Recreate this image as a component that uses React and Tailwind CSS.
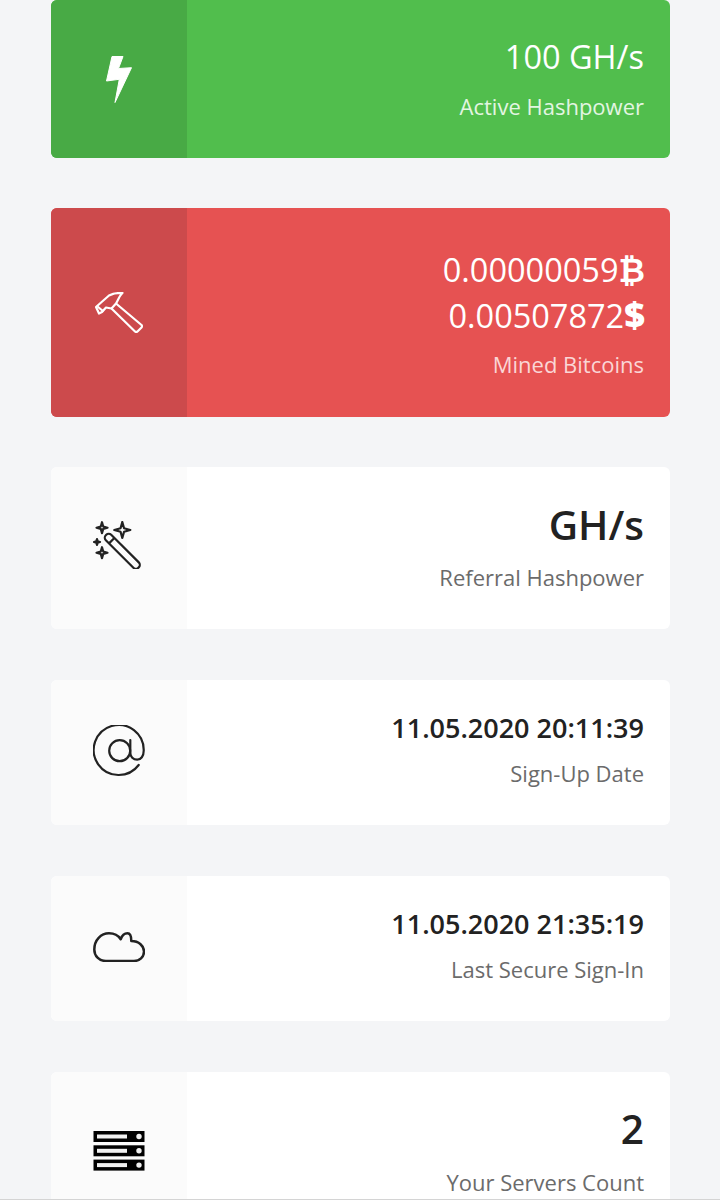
const font = { fontFamily: '"Open Sans", sans-serif' };

function Bolt() {
  return (
    <svg width="26" height="47" viewBox="0 0 26 47" fill="white" stroke="white" strokeWidth="1" strokeLinejoin="round">
      <path d="M6 .5h11l-4.500 12 13-.8L9 46.500l4.300-23.200L.5 25z" />
    </svg>
  );
}

function Hammer() {
  return (
    <svg width="48" height="41" viewBox="0 0 48 41" fill="none" stroke="white" strokeWidth="2.200" strokeLinejoin="round">
      <path d="M1 15L14 3.500C18 1.500 23 .8 27.500 1 25 3 24 6 21 11.500l-4.500 5-5.500-1-4 4.500-3 1.500z" />
      <path d="M2.500 14.500l6 5" />
      <path d="M21 11.500L46.500 33a2 2 0 0 1 0 2.500L42.500 39.500a2 2 0 0 1-2.500 0L16.500 16.500" />
    </svg>
  );
}

function Sparkle({ x, y, r, fill = 'none' }) {
  const k = r * 0.22;
  return (
    <path
      fill={fill}
      d={`M${x} ${y - r}L${x + k} ${y - k}L${x + r} ${y}L${x + k} ${y + k}L${x} ${y + r}L${x - k} ${y + k}L${x - r} ${y}L${x - k} ${y - k}Z`}
    />
  );
}

function Wand() {
  return (
    <svg width="48" height="48" viewBox="0 0 48 48" fill="none" stroke="#222" strokeWidth="2.200" strokeLinejoin="round">
      <Sparkle x={9} y={6.700} r={5.500} />
      <Sparkle x={29.300} y={9} r={8} />
      <Sparkle x={4} y={21} r={3} fill="#222" />
      <Sparkle x={9} y={31.700} r={5.500} />
      <g transform="translate(29.300 30.300) rotate(45)">
        <rect x="-23" y="-3.800" width="46" height="7.600" rx="3.500" />
        <path d="M-15 -3.800V3.800" />
      </g>
    </svg>
  );
}

function At() {
  return (
    <svg width="52" height="52" viewBox="0 0 52 52" fill="none" stroke="#222" strokeWidth="2.200" strokeLinecap="round">
      <circle cx="26.700" cy="25.700" r="10.500" />
      <path d="M45.700 40A25 25 0 1 1 50.700 25.700c0 5.500-2.800 9-6.500 9-4 0-6.900-3-6.900-7V15" />
    </svg>
  );
}

function Cloud() {
  return (
    <svg width="52" height="30" viewBox="0 0 52 30" fill="none" stroke="#222" strokeWidth="2.500" strokeLinejoin="round">
      <path d="M13 29C6 29 1.300 24 1.300 17.500 1.300 8 8 1.300 16 1.300c5 0 9.500 2.500 11.700 6C29 3.500 31.500 1.300 34.500 1.300c2.800 0 3.800 3.500 3.800 7.700C46 9 51 14 51 19.500 51 25 46.500 29 41 29z" />
    </svg>
  );
}

function Servers() {
  return (
    <svg width="52" height="40" viewBox="0 0 52 40">
      {[0, 14.300, 28.600].map((y) => (
        <g key={y}>
          <rect x="0.500" y={y} width="51" height="11" fill="#000" />
          <rect x="4" y={y + 3.500} width="30" height="4" fill="#f0f0f0" />
          <circle cx="46" cy={y + 5.500} r="2.700" fill="#f0f0f0" />
        </g>
      ))}
    </svg>
  );
}

function Card({ icon, className, iconClass, children }) {
  return (
    <div className={`flex rounded-md overflow-hidden shrink-0 ${className}`}>
      <div className={`w-[136px] shrink-0 flex items-center justify-center ${iconClass}`}>{icon}</div>
      <div className="flex-1 text-right pr-[26px]">{children}</div>
    </div>
  );
}

export default function App() {
  return (
    <div style={font} className="h-[1200px] flex flex-col bg-[#f4f5f7]">
      <div className="flex-1 overflow-hidden pl-[51px] pr-[50px] flex flex-col">
        <Card
          icon={<Bolt />}
          className="h-[158px] bg-[#51be4d] text-white"
          iconClass="bg-[#48aa45]"
        >
          <div className="pt-[36px] text-[32.500px] leading-[42px]">100 GH/s</div>
          <div className="mt-[13px] text-[22px] leading-[30px] text-[#e3f5e2]">Active Hashpower</div>
        </Card>

        <Card
          icon={<Hammer />}
          className="mt-[50px] h-[209px] bg-[#e65252] text-white"
          iconClass="bg-[#cc4a4c]"
        >
          <div className="pt-[39px] text-[32.500px] leading-[46px] -mr-px">0.00000059<span className="font-extrabold">₿</span></div>
          <div className="h-[46px] text-[32.500px] leading-[46px] -mr-px">0.00507872<span className="font-extrabold text-[36px] leading-none">$</span></div>
          <div className="mt-[10px] text-[22px] leading-[30px] text-[#fad6d6]">Mined Bitcoins</div>
        </Card>

        <Card icon={<div className="-mt-[6px] -ml-[4px]"><Wand /></div>} className="mt-[50px] h-[162px] bg-white" iconClass="bg-[#fbfbfb]">
          <div className="pt-[32px] text-[40.500px] leading-[52px] font-semibold text-[#222]">GH/s</div>
          <div className="mt-[11px] text-[22px] leading-[30px] text-[#6b6b6b]">Referral Hashpower</div>
        </Card>

        <Card icon={<div className="-mt-[4px]"><At /></div>} className="mt-[51px] h-[145px] bg-white" iconClass="bg-[#fbfbfb]">
          <div className="pt-[29px] text-[27px] leading-[38px] font-semibold text-[#222]">11.05.2020 20:11:39</div>
          <div className="mt-[11px] text-[22px] leading-[30px] text-[#6b6b6b]">Sign-Up Date</div>
        </Card>

        <Card icon={<div className="-mt-[4px]"><Cloud /></div>} className="mt-[51px] h-[145px] bg-white" iconClass="bg-[#fbfbfb]">
          <div className="pt-[29px] text-[27px] leading-[38px] font-semibold text-[#222]">11.05.2020 21:35:19</div>
          <div className="mt-[11px] text-[22px] leading-[30px] text-[#6b6b6b]">Last Secure Sign-In</div>
        </Card>

        <Card icon={<div className="-mt-[5px]"><Servers /></div>} className="mt-[51px] h-[162px] bg-white" iconClass="bg-[#fbfbfb]">
          <div className="pt-[31px] text-[40.500px] leading-[52px] font-semibold text-[#222]">2</div>
          <div className="mt-[12px] text-[22px] leading-[30px] text-[#6b6b6b]">Your Servers Count</div>
        </Card>
      </div>
      <div className="h-px bg-[#d4d4d4]" />
    </div>
  );
}
